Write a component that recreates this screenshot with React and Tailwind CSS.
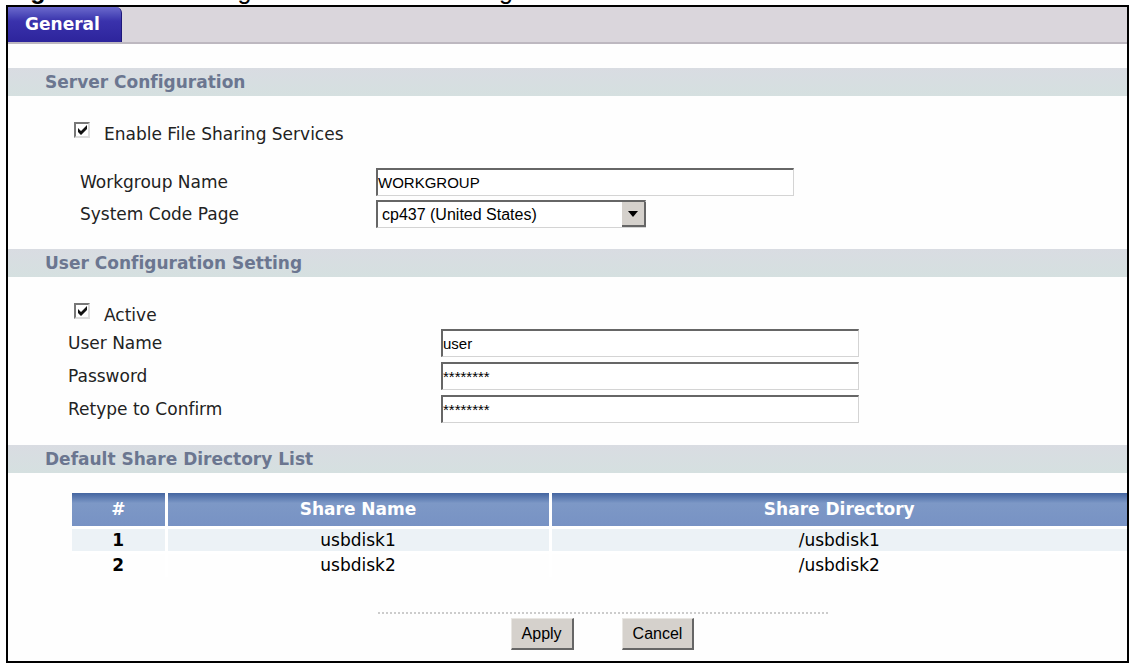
import React, { useState } from 'react';

const labelText = 'font-["DejaVu_Sans",Verdana,sans-serif] text-[17px] leading-6 text-[#222]';

const fieldBox =
  'border-2 border-t-[#666] border-l-[#666] border-r-[#d4d4d4] border-b-[#d4d4d4] border-r border-b bg-white text-black outline-none font-["Liberation_Sans",Arial,sans-serif]';

const shares = [
  { id: 1, name: 'usbdisk1', directory: '/usbdisk1' },
  { id: 2, name: 'usbdisk2', directory: '/usbdisk2' },
];

const SectionTitle = ({ children }) => (
  <h2 className="h-7 bg-linear-to-b from-[#d9dce2] to-[#d5e0e0] pl-[37px] font-['DejaVu_Sans',Verdana,sans-serif] text-[17px] leading-7 font-bold text-[#6b7690]">
    {children}
  </h2>
);

const CheckBox = ({ id, label, checked, onChange }) => (
  <div className="flex h-6 items-start gap-[14px] pl-[66px]">
    <span className="relative h-4 w-4">
      <input
        id={id}
        type="checkbox"
        checked={checked}
        onChange={(e) => onChange(e.target.checked)}
        className="block h-4 w-4 appearance-none border-2 border-t-[#777] border-l-[#777] border-r-[#ddd] border-b-[#ddd] bg-white"
      />
      {checked && (
        <svg viewBox="0 0 16 16" className="pointer-events-none absolute inset-0 h-4 w-4">
          <path d="M4 6 L7 9 L13 3 V7 L7 13 L4 10 Z" fill="#111" />
        </svg>
      )}
    </span>
    <label htmlFor={id} className={labelText}>{label}</label>
  </div>
);

const TextField = ({ id, type = 'text', value, onChange }) => (
  <input
    id={id}
    type={type}
    value={value}
    onChange={(e) => onChange(e.target.value)}
    className={`${fieldBox} h-7 w-[418px] text-[15px]`}
  />
);

const ActionButton = ({ children }) => (
  <button
    type="button"
    className="h-8 border-t border-l border-r-2 border-b-2 border-t-[#e8e6e2] border-l-[#e8e6e2] border-r-[#666] border-b-[#666] bg-[#d5d1cc] px-[10px] font-['Liberation_Sans',Arial,sans-serif] text-[16px] text-black"
  >
    {children}
  </button>
);

const FileSharing = () => {
  const [enabled, setEnabled] = useState(true);
  const [workgroup, setWorkgroup] = useState('WORKGROUP');
  const [codePage, setCodePage] = useState('cp437');
  const [active, setActive] = useState(true);
  const [userName, setUserName] = useState('user');
  const [password, setPassword] = useState('********');
  const [confirm, setConfirm] = useState('********');

  return (
    <div className="min-h-screen bg-white pr-0.5 pl-1.5 [font-variant-ligatures:none]">
      {/* caption scrolled almost out of view, only the descenders remain */}
      <div className="flex h-[5px] flex-col justify-end overflow-hidden pb-0.5">
        <div className="grid shrink-0 grid-cols-[110px_317px_1fr] pl-0.5 font-['Liberation_Sans',Arial,sans-serif] text-[25px] leading-[25px] text-black">
          <b>Figure</b>
          <span>File Sharing</span>
          <span>Setting</span>
        </div>
      </div>
      <main className="border-2 border-black bg-[#fefefe]">
        <nav className="flex h-[37px] border-b-2 border-[#bdb8c0] bg-[#dad6dc]">
          <button
            type="button"
            className="h-[35px] w-[114px] rounded-tr-md border-r border-[#1d187a] bg-linear-to-b from-[#6c69cc] via-[#3a32ac] via-40% to-[#2d249c] pr-1 font-['DejaVu_Sans',Verdana,sans-serif] text-[17px] font-bold text-white"
          >
            General
          </button>
        </nav>

        <form onSubmit={(e) => e.preventDefault()}>
          <section className="pt-6">
            <SectionTitle>Server Configuration</SectionTitle>
            <div className="pt-[26px] pb-[21px]">
              <CheckBox
                id="enable"
                label="Enable File Sharing Services"
                checked={enabled}
                onChange={setEnabled}
              />
              <div className="mt-[22px] grid grid-cols-[296px_1fr] items-center gap-y-1 pl-[72px]">
                <label htmlFor="workgroup" className={labelText}>Workgroup Name</label>
                <TextField id="workgroup" value={workgroup} onChange={setWorkgroup} />
                <label htmlFor="codepage" className={labelText}>System Code Page</label>
                <div className="relative w-[270px]">
                  <select
                    id="codepage"
                    value={codePage}
                    onChange={(e) => setCodePage(e.target.value)}
                    className={`${fieldBox} block h-7 w-full appearance-none pl-1 text-[16px]`}
                  >
                    <option value="cp437">cp437 (United States)</option>
                    <option value="cp850">cp850 (Western European)</option>
                  </select>
                  <span className="pointer-events-none absolute top-0.5 right-0 flex h-[25px] w-6 items-center justify-center border-r-2 border-b-2 border-[#666] bg-[#d5d1cc]">
                    <svg viewBox="0 0 10 6" className="h-1.5 w-2.5">
                      <path d="M0 0 H10 L5 6 Z" fill="#000" />
                    </svg>
                  </span>
                </div>
              </div>
            </div>
          </section>

          <section>
            <SectionTitle>User Configuration Setting</SectionTitle>
            <div className="pt-[26px] pb-[22px]">
              <CheckBox id="active" label="Active" checked={active} onChange={setActive} />
              <div className="mt-0.5 grid grid-cols-[373px_1fr] items-center gap-y-[5px] pl-[60px]">
                <label htmlFor="username" className={labelText}>User Name</label>
                <TextField id="username" value={userName} onChange={setUserName} />
                <label htmlFor="password" className={labelText}>Password</label>
                <TextField id="password" value={password} onChange={setPassword} />
                <label htmlFor="confirm" className={labelText}>Retype to Confirm</label>
                <TextField id="confirm" value={confirm} onChange={setConfirm} />
              </div>
            </div>
          </section>

          <section>
            <SectionTitle>Default Share Directory List</SectionTitle>
            <div className="pt-5 pl-16">
              <table className="w-full table-fixed border-collapse text-center font-['DejaVu_Sans',Verdana,sans-serif] text-[17px] leading-5 text-black">
                <colgroup>
                  <col className="w-[94px]" />
                  <col className="w-[384px]" />
                  <col />
                </colgroup>
                <thead>
                  <tr className="h-[34px] bg-linear-to-b from-[#4465a0] via-[#7d98c6] via-30% to-[#7792c4] text-white">
                    <th className="border-r-[3px] border-white">#</th>
                    <th className="border-r-[3px] border-white">Share Name</th>
                    <th>Share Directory</th>
                  </tr>
                </thead>
                <tbody>
                  {shares.map((share) => (
                    <tr key={share.id} className="h-[25px] border-t-[3px] border-white odd:bg-[#ecf2f6]">
                      <td className="border-r-[3px] border-white font-bold">{share.id}</td>
                      <td className="border-r-[3px] border-white">{share.name}</td>
                      <td>{share.directory}</td>
                    </tr>
                  ))}
                </tbody>
              </table>
            </div>
          </section>

          <footer className="flex flex-col items-center pt-[35px] pb-[11px] pl-[70px]">
            <div className="w-[450px] border-t-2 border-dotted border-[#ccc]" />
            <div className="mt-1 flex gap-12">
              <ActionButton>Apply</ActionButton>
              <ActionButton>Cancel</ActionButton>
            </div>
          </footer>
        </form>
      </main>
    </div>
  );
};

export default FileSharing;
